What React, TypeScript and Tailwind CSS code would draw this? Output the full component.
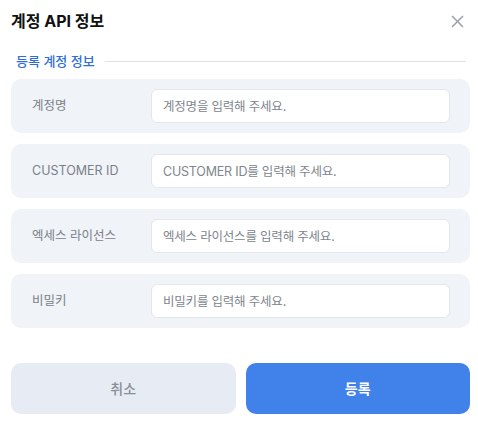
const fields = [
  { label: "계정명", placeholder: "계정명을 입력해 주세요." },
  { label: "CUSTOMER ID", placeholder: "CUSTOMER ID를 입력해 주세요." },
  { label: "엑세스 라이선스", placeholder: "엑세스 라이선스를 입력해 주세요." },
  { label: "비밀키", placeholder: "비밀키를 입력해 주세요." },
];

export default function App() {
  return (
    <div
      className="w-[478px] h-[423px] bg-white pl-[11px] pr-[8px] pt-[10px]"
      style={{ fontFamily: "Inter, 'Noto Sans CJK KR', sans-serif" }}
    >
      {/* Header */}
      <div className="flex items-center justify-between h-[22px]">
        <h1 className="text-[16px] font-bold text-[#111] leading-none">계정 API 정보</h1>
        <button className="mr-[6px] text-[#9ca3af]">
          <svg width="13" height="13" viewBox="0 0 13 13" fill="none" stroke="currentColor" strokeWidth="1.6">
            <path d="M1 1L12 12M12 1L1 12" />
          </svg>
        </button>
      </div>

      {/* Section title */}
      <div className="flex items-center gap-[10px] mt-[23px] pl-[5px] pr-[4px]">
        <span className="text-[13px] text-[#2f6fd1] font-medium leading-none">등록 계정 정보</span>
        <div className="flex-1 h-px bg-[#dde3ea]" />
      </div>

      {/* Fields */}
      <div className="flex flex-col gap-[11px] mt-[11px]">
        {fields.map((f) => (
          <div key={f.label} className="flex items-center h-[54px] rounded-[10px] bg-[#f0f3f7] pl-[21px] pr-[20px]">
            <span className="w-[119px] text-[12.5px] text-[#7a808a]">{f.label}</span>
            <input
              placeholder={f.placeholder}
              className="flex-1 h-[34px] rounded-[6px] border border-[#e3e7ec] bg-white px-[11px] text-[12.5px] tracking-[-0.2px] outline-none placeholder:text-[#80858e]"
            />
          </div>
        ))}
      </div>

      {/* Buttons */}
      <div className="flex gap-[10px] mt-[35px]">
        <button className="flex-1 h-[51px] rounded-[10px] bg-[#e7ecf4] text-[14px] font-medium text-[#8a8f98]">취소</button>
        <button className="flex-1 h-[51px] rounded-[10px] bg-[#4181ea] text-[14px] font-bold text-white">등록</button>
      </div>
    </div>
  );
}
